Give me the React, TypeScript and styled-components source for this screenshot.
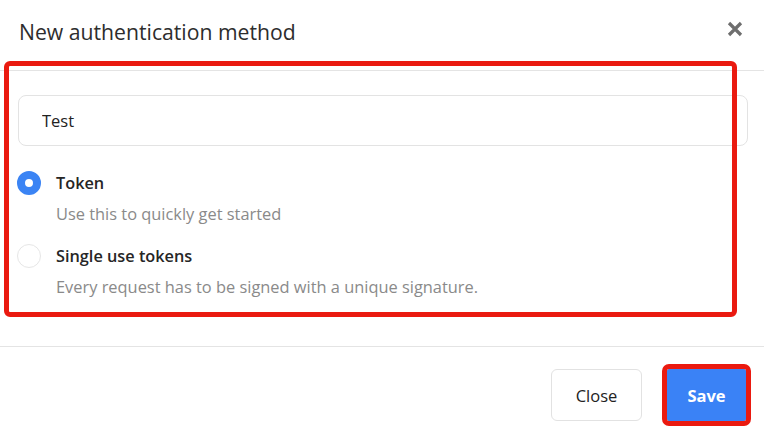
import styled, { createGlobalStyle } from 'styled-components';

const GlobalStyle = createGlobalStyle`
  html, body {
    margin: 0;
    padding: 0;
    background: #ffffff;
  }
  * {
    box-sizing: border-box;
  }
`;

const Dialog = styled.div`
  position: relative;
  width: 764px;
  height: 436px;
  display: flex;
  flex-direction: column;
  background: #ffffff;
  font-family: "Open Sans", "Liberation Sans", sans-serif;
  color: #222;
  overflow: hidden;
`;

const Header = styled.header`
  height: 71px;
  padding: 0 21px 7px 19px;
  display: flex;
  align-items: center;
  justify-content: space-between;
  border-bottom: 1px solid #e4e4e4;
`;

const Title = styled.h2`
  margin: 0;
  font-size: 21.2px;
  font-weight: 400;
  color: #2d2d2d;
`;

const CloseIcon = styled.button`
  border: none;
  background: none;
  padding: 0;
  width: 16px;
  height: 16px;
  margin-bottom: 5px;
  display: flex;
  cursor: pointer;
`;

const Body = styled.div`
  flex: 1;
  padding: 24px 16px 0 18px;
  display: flex;
  flex-direction: column;
`;

const NameInput = styled.input`
  width: 730px;
  height: 51px;
  border: 1px solid #e3e3e3;
  border-radius: 8px;
  padding: 0 0 0 23px;
  font-family: inherit;
  font-size: 16.5px;
  color: #222;
  outline: none;
`;

const Options = styled.div`
  margin-top: 25px;
  display: flex;
  flex-direction: column;
  gap: 19px;
`;

const Option = styled.label`
  display: grid;
  grid-template-columns: 24px 1fr;
  column-gap: 15px;
  row-gap: 8px;
  margin-left: -1px;
  cursor: pointer;
`;

const RadioDot = styled.span<{ $checked?: boolean }>`
  width: 24px;
  height: 24px;
  border-radius: 50%;
  border: ${(p) => (p.$checked ? '8px solid #3b84f4' : '1px solid #e6e6e6')};
  background: #fff;
`;

const OptionTitle = styled.span`
  font-size: 16.3px;
  font-weight: 600;
  color: #262626;
  line-height: 24px;
`;

const OptionDesc = styled.span`
  grid-column: 2;
  font-size: 16.4px;
  color: #8a8a8a;
  line-height: 22px;
`;

const Footer = styled.footer`
  height: 90px;
  border-top: 1px solid #e4e4e4;
  padding: 22px 18px 0 0;
  display: flex;
  justify-content: flex-end;
  align-items: flex-start;
  gap: 25px;
`;

const Button = styled.button<{ $primary?: boolean }>`
  height: 52px;
  width: ${(p) => (p.$primary ? '79px' : '91px')};
  padding: 0;
  border-radius: ${(p) => (p.$primary ? '2px' : '6px')};
  font-family: inherit;
  font-size: 16.5px;
  font-weight: ${(p) => (p.$primary ? 700 : 400)};
  color: ${(p) => (p.$primary ? '#ffffff' : '#222')};
  background: ${(p) => (p.$primary ? '#3a82f6' : '#ffffff')};
  border: 1px solid ${(p) => (p.$primary ? '#3a82f6' : '#e2e2e2')};
  outline: ${(p) => (p.$primary ? '5px solid #ea1a10' : 'none')};
  cursor: pointer;
`;

const Highlight = styled.div`
  position: absolute;
  left: 4px;
  top: 61px;
  width: 733px;
  height: 256px;
  border: 5px solid #ea1a10;
  border-radius: 6px;
  pointer-events: none;
`;

export default function App() {
  return (
    <>
      <GlobalStyle />
      <Dialog>
        <Header>
          <Title>New authentication method</Title>
          <CloseIcon aria-label="Close">
            <svg width="16" height="16" viewBox="0 0 16 16">
              <path d="M2 2L14 14M14 2L2 14" stroke="#6e6e6e" strokeWidth="3.2" />
            </svg>
          </CloseIcon>
        </Header>
        <Body>
          <NameInput defaultValue="Test" />
          <Options>
            <Option>
              <RadioDot $checked />
              <OptionTitle>Token</OptionTitle>
              <OptionDesc>Use this to quickly get started</OptionDesc>
            </Option>
            <Option>
              <RadioDot />
              <OptionTitle>Single use tokens</OptionTitle>
              <OptionDesc>Every request has to be signed with a unique signature.</OptionDesc>
            </Option>
          </Options>
        </Body>
        <Footer>
          <Button>Close</Button>
          <Button $primary>Save</Button>
        </Footer>
        <Highlight />
      </Dialog>
    </>
  );
}
